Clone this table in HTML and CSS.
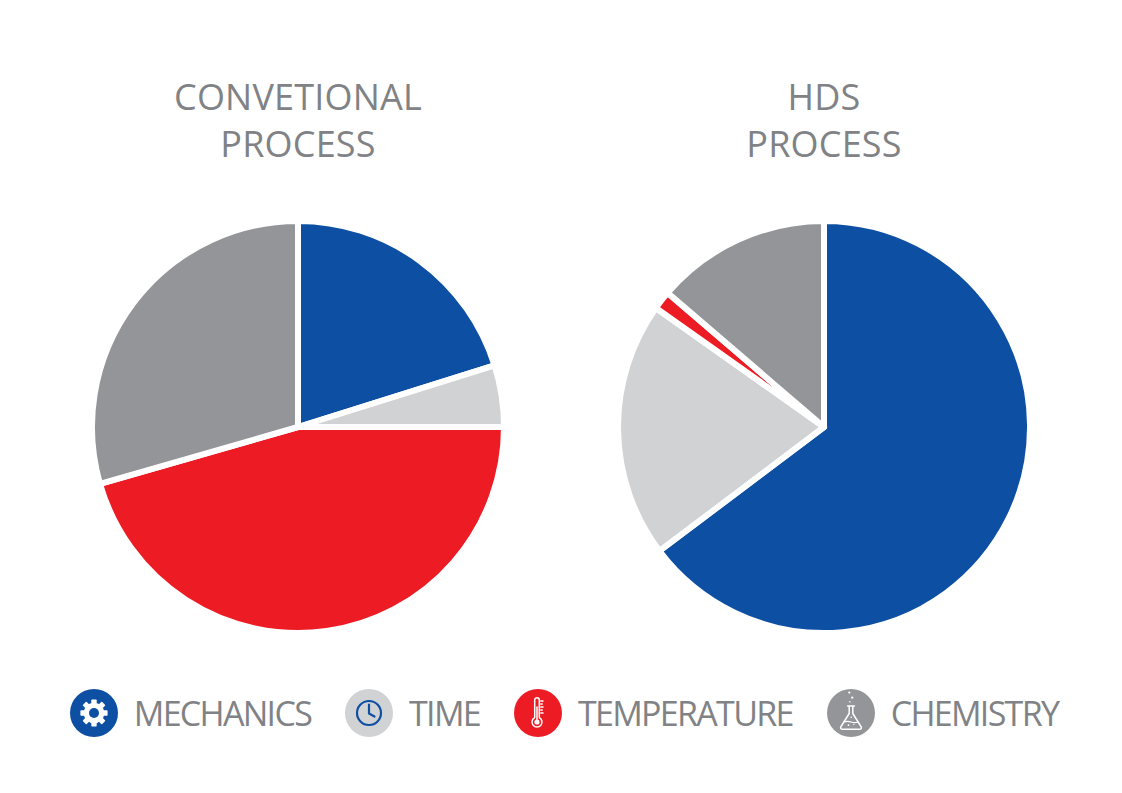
FILE: index.html
```html
<!DOCTYPE html>
<html lang="en">
<head>
<meta charset="utf-8">
<title>Conventional vs HDS process</title>
<link rel="stylesheet" href="styles.css">
</head>
<body>
<main class="page">
  <section class="charts">
    <figure class="chart">
      <h2 class="chart-title">CONVETIONAL<br>PROCESS</h2>
      <svg class="pie" width="414" height="414" viewBox="0 0 414 414">
        <path class="slice mech" d="M207,207 L207,1 A206,206 0 0 1 403.57,145.4 Z"/>
        <path class="slice time" d="M207,207 L403.57,145.4 A206,206 0 0 1 413,207 Z"/>
        <path class="slice temp" d="M207,207 L413,207 A206,206 0 0 1 8.97,263.78 Z"/>
        <path class="slice chem" d="M207,207 L8.97,263.78 A206,206 0 0 1 207,1 Z"/>
      </svg>
    </figure>
    <figure class="chart">
      <h2 class="chart-title">HDS<br>PROCESS</h2>
      <svg class="pie" width="414" height="414" viewBox="0 0 414 414">
        <path class="slice mech" d="M207,207 L207,1 A206,206 0 1 1 42.5,330.97 Z"/>
        <path class="slice time" d="M207,207 L42.5,330.97 A206,206 0 0 1 38.9,88.0 Z"/>
        <path class="slice temp" d="M207,207 L38.9,88.0 A206,206 0 0 1 50.6,72.9 Z"/>
        <path class="slice chem" d="M207,207 L50.6,72.9 A206,206 0 0 1 207,1 Z"/>
      </svg>
    </figure>
  </section>
  <ul class="legend">
    <li class="legend-item">
      <svg class="legend-icon" viewBox="0 0 48 48">
        <circle class="bg-mech" cx="24" cy="24" r="24"/>
        <g transform="translate(24 24)" fill="#fff">
          <circle r="10.3"/>
          <rect x="-2.7" y="-13.6" width="5.4" height="6" rx="0.8"/>
          <rect x="-2.7" y="-13.6" width="5.4" height="6" rx="0.8" transform="rotate(45)"/>
          <rect x="-2.7" y="-13.6" width="5.4" height="6" rx="0.8" transform="rotate(90)"/>
          <rect x="-2.7" y="-13.6" width="5.4" height="6" rx="0.8" transform="rotate(135)"/>
          <rect x="-2.7" y="-13.6" width="5.4" height="6" rx="0.8" transform="rotate(180)"/>
          <rect x="-2.7" y="-13.6" width="5.4" height="6" rx="0.8" transform="rotate(225)"/>
          <rect x="-2.7" y="-13.6" width="5.4" height="6" rx="0.8" transform="rotate(270)"/>
          <rect x="-2.7" y="-13.6" width="5.4" height="6" rx="0.8" transform="rotate(315)"/>
          <circle class="bg-mech" r="5"/>
        </g>
      </svg>
      <span>MECHANICS</span>
    </li>
    <li class="legend-item">
      <svg class="legend-icon" viewBox="0 0 48 48">
        <circle class="bg-time" cx="24" cy="24" r="24"/>
        <g fill="none" stroke="#0d4fa2" stroke-width="2.2" stroke-linecap="round" stroke-linejoin="round">
          <circle cx="24" cy="24" r="12"/>
          <path d="M24,15.5 V24.5 L29.5,27.5"/>
        </g>
      </svg>
      <span>TIME</span>
    </li>
    <li class="legend-item">
      <svg class="legend-icon" viewBox="0 0 48 48">
        <circle class="bg-temp" cx="24" cy="24" r="24"/>
        <g fill="none" stroke="#fff" stroke-width="1.5" stroke-linecap="round" stroke-linejoin="round">
          <path d="M20.7,28.6 V11 a2.3,2.3 0 0 1 4.6,0 V28.6 a5,5 0 1 1 -4.6,0 Z"/>
          <path d="M23,18 V31"/>
          <path d="M26.8,12 H29 M26.8,15 H28.2 M26.8,18 H29 M26.8,21 H28.2 M26.8,24 H29"/>
        </g>
        <circle cx="23" cy="33" r="2.6" fill="#fff"/>
      </svg>
      <span>TEMPERATURE</span>
    </li>
    <li class="legend-item">
      <svg class="legend-icon" viewBox="0 0 48 48">
        <circle class="bg-chem" cx="24" cy="24" r="24"/>
        <g fill="none" stroke="#fff" stroke-width="1.5" stroke-linecap="round" stroke-linejoin="round">
          <path d="M20.6,17 H27.4 M22.2,17 V24.5 L13.8,37.8 Q12.9,40.2 15.6,40.2 H32.4 Q35.1,40.2 34.2,37.8 L25.8,24.5 V17"/>
          <path d="M16.8,33 Q20.4,31.6 24,33 T31.2,33" stroke-width="1.2"/>
        </g>
        <g fill="#fff">
          <circle cx="22.3" cy="3.6" r="1.1"/>
          <circle cx="25.2" cy="8.6" r="1.2"/>
          <circle cx="22.9" cy="12.8" r="0.8"/>
          <circle cx="24.3" cy="28.2" r="0.8"/>
          <circle cx="21.5" cy="36.2" r="0.9"/>
          <circle cx="26.8" cy="35.6" r="0.7"/>
        </g>
      </svg>
      <span>CHEMISTRY</span>
    </li>
  </ul>
</main>
</body>
</html>
```

FILE: styles.css
```css
body {
  margin: 0;
  background: #ffffff;
  font-family: "Open Sans", "Noto Sans", sans-serif;
  color: #808285;
}

.page {
  width: 1122px;
  padding-top: 73px;
}

.charts {
  display: grid;
  grid-template-columns: 414px 414px;
  column-gap: 112px;
  justify-content: center;
}

.chart {
  margin: 0;
  display: flex;
  flex-direction: column;
  align-items: center;
}

.chart-title {
  margin: 0;
  font-size: 36px;
  line-height: 47px;
  font-weight: 400;
  letter-spacing: 0.2px;
  text-align: center;
}

.pie {
  display: block;
  margin-top: 53px;
}

.slice {
  stroke: #ffffff;
  stroke-width: 6;
  stroke-linejoin: round;
}

.mech, .bg-mech { fill: #0d4fa2; }
.time, .bg-time { fill: #d1d2d4; }
.temp, .bg-temp { fill: #ed1c24; }
.chem, .bg-chem { fill: #939598; }

.legend {
  list-style: none;
  margin: 55px 0 0;
  padding: 0 0 0 6px;
  display: flex;
  justify-content: center;
  gap: 34px;
}

.legend-item {
  display: flex;
  align-items: center;
  gap: 16px;
  font-size: 34px;
  line-height: 48px;
  letter-spacing: -1.7px;
}

.legend-icon {
  display: block;
  flex: none;
  width: 48px;
  height: 48px;
}
```
